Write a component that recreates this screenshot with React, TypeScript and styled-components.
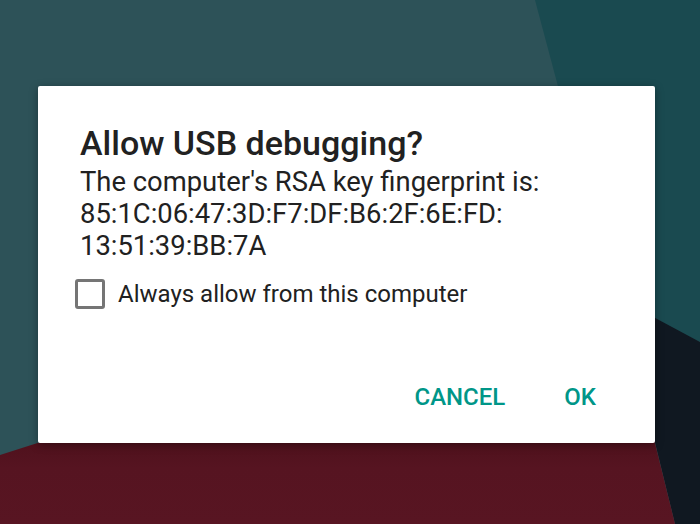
import React from 'react';
import styled, { createGlobalStyle } from 'styled-components';

const Global = createGlobalStyle`
  html, body {margin: 0;padding: 0;background: #2d5258;}
  * {box-sizing: border-box;}
`

const Screen = styled.div`
  position: relative;
  width: 700px;
  height: 524px;
  overflow: hidden;
  font-family: Roboto, "Noto Sans", sans-serif;
  .wallpaper {position: absolute;inset: 0;}
`

const Stage = styled.div`
  position: relative;
  display: flex;
  padding: 86px 0 0 38px;
`

const Dialog = styled.div`
  width: 617px;
  height: 357px;
  background: #fff;
  border-radius: 2px;
  box-shadow: 0 2px 8px rgba(0, 0, 0, .35);
  padding: 38px 40px 0 42px;
  display: flex;
  flex-direction: column;
`

const Title = styled.h1`
  margin: 0;
  font-size: 34px;
  font-weight: 500;
  line-height: 38px;
  color: #212121;
  white-space: nowrap;
`

const Body = styled.p`
  margin: 4px 0 0;
  font-size: 27.4px;
  line-height: 32px;
  color: #212121;
  white-space: nowrap;
`

const CheckRow = styled.label`
  display: flex;
  align-items: center;
  gap: 13px;
  margin: 17px 0 0 -5px;
  font-size: 24px;
  color: #212121;
  white-space: nowrap;
`

const Box = styled.span`
  width: 30px;
  height: 30px;
  border: 3px solid #757575;
  border-radius: 3px;
  flex-shrink: 0;
`

const Actions = styled.div`
  margin-top: auto;
  display: flex;
  justify-content: flex-end;
  gap: 59px;
  padding: 0 19px 32px 0;
`

const Action = styled.button`
  border: none;
  background: none;
  padding: 0;
  font-family: inherit;
  font-size: 24px;
  font-weight: 500;
  color: #009688;
  line-height: 28px;
`

const Wallpaper = () => (
  <svg className="wallpaper" width="700" height="524" viewBox="0 0 700 524">
    <defs>
      <linearGradient id="red" x1="0" y1="0" x2="0" y2="1">
        <stop offset="0" stopColor="#4a0f19" />
        <stop offset="0.45" stopColor="#561421" />
        <stop offset="1" stopColor="#581522" />
      </linearGradient>
    </defs>
    <rect width="700" height="524" fill="#2d5258" />
    <polygon points="535,0 700,0 700,342 615,300" fill="#1a4a50" />
    <polygon points="560,267 700,342 700,524 675,524 620,300" fill="#101821" />
    <polygon points="0,455 100,423 650,423 675,524 0,524" fill="url(#red)" />
  </svg>
)

export default function App() {
  return (
    <Screen>
      <Global />
      <Wallpaper />
      <Stage>
        <Dialog>
          <Title>Allow USB debugging?</Title>
          <Body>
            The computer's RSA key fingerprint is:<br />
            85:1C:06:47:3D:F7:DF:B6:2F:6E:FD:<br />
            13:51:39:BB:7A
          </Body>
          <CheckRow>
            <Box />
            Always allow from this computer
          </CheckRow>
          <Actions>
            <Action>CANCEL</Action>
            <Action>OK</Action>
          </Actions>
        </Dialog>
      </Stage>
    </Screen>
  );
}
